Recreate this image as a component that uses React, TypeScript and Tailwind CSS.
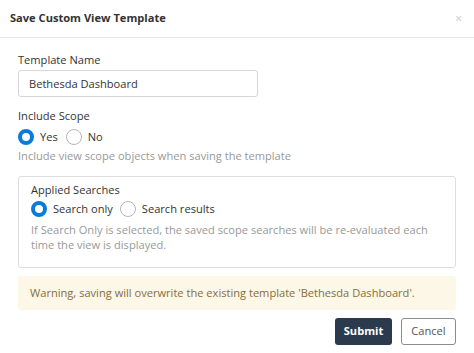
import { useState } from "react";

type RadioProps = {
  checked: boolean,
  label: string,
  onSelect: () => void,
};

const Radio = ({ checked, label, onSelect }: RadioProps) => {
  return (
    <label className="flex items-center gap-[6px] cursor-pointer" onClick={onSelect}>
      <span
        className={[
          "w-[16px] h-[16px] rounded-full bg-white shrink-0",
          checked ? "border-[4px] border-[#0a7bd6]" : "border border-[#b5b5b5]",
        ].join(" ")}
      />
      <span className="text-[#333]">{label}</span>
    </label>
  );
};

export default function App() {
  const [name, setName] = useState("Bethesda Dashboard");
  const [includeScope, setIncludeScope] = useState(true);
  const [searchOnly, setSearchOnly] = useState(true);

  return (
    <div className="w-[474px] h-[353px] bg-white text-[11.1px] text-[#333] font-['Open_Sans',sans-serif]">
      <div className="h-[38px] flex items-center justify-between pl-[10px] pr-[12px] border-b border-[#e8e8e8]">
        <div className="font-bold text-[11.1px] text-[#333]">Save Custom View Template</div>
        <button className="text-[#c8c8c8] text-[12px] leading-none">×</button>
      </div>

      <div className="px-[18px] pt-[14px]">
        <div className="leading-[16px]">Template Name</div>
        <input
          value={name}
          onChange={e => setName(e.target.value)}
          className="mt-[2px] w-[240px] h-[27px] px-[10px] border border-[#d6d6d6] rounded-[3px] text-[11.1px] text-[#333] outline-none"
        />

        <div className="mt-[11px] leading-[16px]">Include Scope</div>
        <div className="mt-[5px] flex items-center gap-[8px] h-[17px]">
          <Radio checked={includeScope} label="Yes" onSelect={() => setIncludeScope(true)} />
          <Radio checked={!includeScope} label="No" onSelect={() => setIncludeScope(false)} />
        </div>
        <div className="mt-[2px] leading-[16px] text-[#999]">Include view scope objects when saving the template</div>

        <div className="mt-[12px] border border-[#dedede] rounded-[3px] pl-[12px] pr-[10px] pt-[5px] pb-[15px]">
          <div className="leading-[16px]">Applied Searches</div>
          <div className="mt-[3px] flex items-center gap-[7px] h-[17px]">
            <Radio checked={searchOnly} label="Search only" onSelect={() => setSearchOnly(true)} />
            <Radio checked={!searchOnly} label="Search results" onSelect={() => setSearchOnly(false)} />
          </div>
          <div className="mt-[4px] leading-[15px] text-[#999]">
            If Search Only is selected, the saved scope searches will be re-evaluated each time the view is displayed.
          </div>
        </div>

        <div className="mt-[8px] h-[34px] flex items-center px-[12px] bg-[#fcf7e6] rounded-[3px] text-[#8a6d3b]">
          Warning, saving will overwrite the existing template 'Bethesda Dashboard'.
        </div>

        <div className="mt-[8px] flex justify-end gap-[9px]">
          <button className="h-[27px] w-[57px] rounded-[3px] bg-[#2b3a4d] text-white font-bold text-[11.1px]">Submit</button>
          <button className="h-[27px] w-[55px] rounded-[3px] border border-[#8c8c8c] bg-white text-[#555] text-[11.1px]">Cancel</button>
        </div>
      </div>
    </div>
  );
}
